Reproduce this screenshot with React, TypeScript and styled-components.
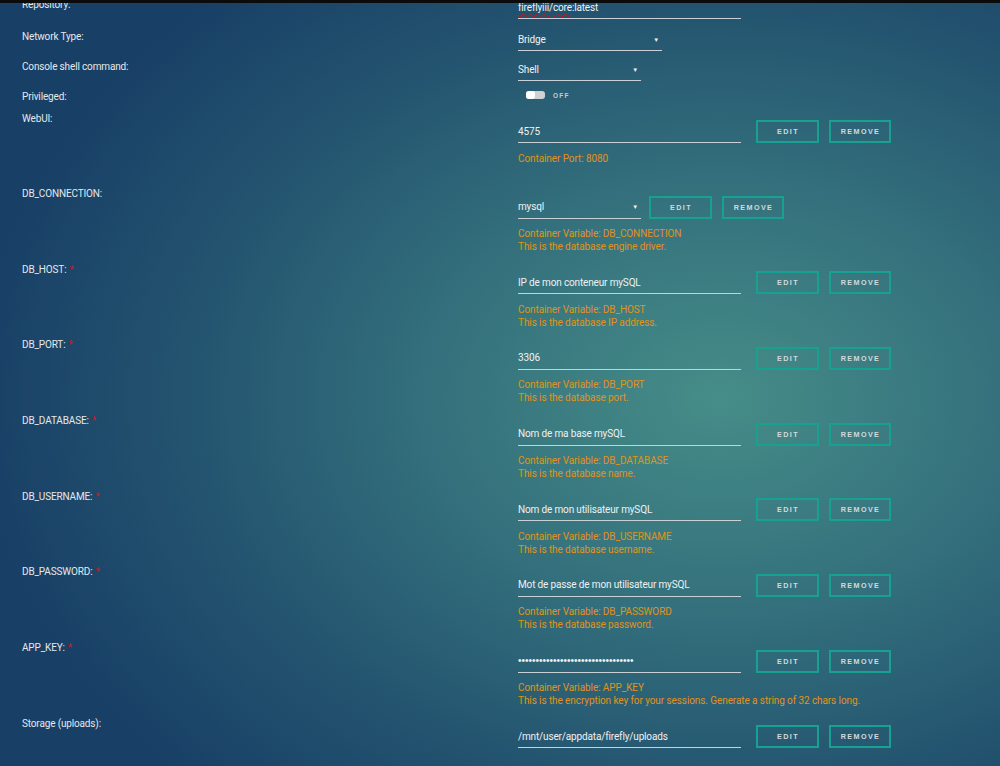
import React from "react";
import styled, { createGlobalStyle } from "styled-components";

const GlobalStyle = createGlobalStyle`
  html, body {
    margin: 0;
    padding: 0;
  }
  body {
    width: 1000px;
    height: 766px;
    overflow: hidden;
    font-family: Roboto, "Liberation Sans", Arial, sans-serif;
    background: radial-gradient(ellipse 75% 72% at 72% 52%, #468d88 0%, #336f7c 40%, #23536f 72%, #183f66 100%);
  }
`;

const TopBar = styled.div`
  position: fixed;
  top: 0;
  left: 0;
  right: 0;
  height: 3px;
  background: #0b0b0c;
  z-index: 5;
`;

const Page = styled.div`
  height: 766px;
  overflow: hidden;
  margin-top: -4px;
`;

type Kind = "first" | "simple" | "toggle" | "env";

const pad: Record<Kind, string> = {
  first: "9px",
  simple: "7px",
  toggle: "0",
  env: "9.67px",
};

const Row = styled.div<{ $kind: Kind }>`
  display: grid;
  grid-template-columns: 496px 1fr;
  padding-left: 22px;
  padding-bottom: ${(p) => pad[p.$kind]};
  height: ${(p) => (p.$kind === "toggle" ? "22px" : "auto")};
  box-sizing: border-box;
`;

const Label = styled.div`
  font-size: 10px;
  letter-spacing: -0.15px;
  line-height: 14px;
  padding-top: 1.5px;
  color: #e4e8ea;
`;

const Required = styled.span`
  color: #d3141c;
  margin-left: 3px;
`;

const Field = styled.div<{ $env?: boolean }>`
  padding-top: ${(p) => (p.$env ? "10px" : "0")};
  display: flex;
  flex-direction: column;
`;

const InputLine = styled.div<{ $gap: number }>`
  display: flex;
  align-items: flex-start;
  gap: ${(p) => p.$gap}px;
`;

const TextInput = styled.div<{ $w: number }>`
  width: ${(p) => p.$w}px;
  height: 23px;
  box-sizing: border-box;
  border-bottom: 1.5px solid #c9d1d6;
  display: flex;
  align-items: center;
  justify-content: space-between;
  font-size: 10px;
  letter-spacing: -0.15px;
  color: #eef1f2;
  white-space: nowrap;
`;

const Secret = styled.span`
  font-family: "Liberation Sans", Arial, sans-serif;
  font-size: 10px;
  letter-spacing: 0;
`;

const Arrow = styled.span`
  font-size: 6px;
  color: #eef1f2;
  margin-right: 3px;
`;

const Spell = styled.span`
  text-decoration: underline wavy #c8141c;
  text-decoration-thickness: 1px;
  text-underline-offset: 2px;
`;

const Buttons = styled.div`
  display: flex;
  gap: 10px;
`;

const Btn = styled.button<{ $w: number }>`
  width: ${(p) => p.$w}px;
  height: 23px;
  box-sizing: border-box;
  border: 2px solid #16a190;
  background: transparent;
  color: #d3dadd;
  font-family: "Liberation Sans", Arial, sans-serif;
  font-weight: bold;
  font-size: 7.2px;
  letter-spacing: 1.4px;
  padding: 0 0 0 1px;
  text-align: center;
`;

const Help = styled.div`
  margin-top: 8.5px;
  font-size: 10px;
  letter-spacing: -0.09px;
  line-height: 13px;
  color: #e0931a;
  min-height: 26px;
  margin-bottom: -1.5px;
`;

const ToggleWrap = styled.div`
  height: 14px;
  display: flex;
  align-items: center;
  padding-left: 8px;
  gap: 8px;
`;

const Switch = styled.div`
  width: 19px;
  height: 8px;
  border-radius: 3px;
  background: #cfd2d4;
  position: relative;
`;

const Knob = styled.div`
  position: absolute;
  left: 0;
  top: 0;
  width: 9px;
  height: 8px;
  border-radius: 3px;
  background: #ffffff;
`;

const SwitchText = styled.span`
  font-family: "Liberation Sans", Arial, sans-serif;
  font-size: 6.5px;
  font-weight: bold;
  letter-spacing: 1.2px;
  color: #c5ccd0;
`;

type Env = {
  label: string;
  required?: boolean;
  value: string;
  select?: boolean;
  secret?: boolean;
  help: string[];
};

const envs: Env[] = [
  { label: "WebUI:", value: "4575", help: ["Container Port: 8080"] },
  {
    label: "DB_CONNECTION:",
    value: "mysql",
    select: true,
    help: ["Container Variable: DB_CONNECTION", "This is the database engine driver."],
  },
  {
    label: "DB_HOST:",
    required: true,
    value: "IP de mon conteneur mySQL",
    help: ["Container Variable: DB_HOST", "This is the database IP address."],
  },
  {
    label: "DB_PORT:",
    required: true,
    value: "3306",
    help: ["Container Variable: DB_PORT", "This is the database port."],
  },
  {
    label: "DB_DATABASE:",
    required: true,
    value: "Nom de ma base mySQL",
    help: ["Container Variable: DB_DATABASE", "This is the database name."],
  },
  {
    label: "DB_USERNAME:",
    required: true,
    value: "Nom de mon utilisateur mySQL",
    help: ["Container Variable: DB_USERNAME", "This is the database username."],
  },
  {
    label: "DB_PASSWORD:",
    required: true,
    value: "Mot de passe de mon utilisateur mySQL",
    help: ["Container Variable: DB_PASSWORD", "This is the database password."],
  },
  {
    label: "APP_KEY:",
    required: true,
    value: "•".repeat(33),
    secret: true,
    help: [
      "Container Variable: APP_KEY",
      "This is the encryption key for your sessions. Generate a string of 32 chars long.",
    ],
  },
  { label: "Storage (uploads):", value: "/mnt/user/appdata/firefly/uploads", help: [] },
];

export default function App() {
  return (
    <>
      <GlobalStyle />
      <TopBar />
      <Page>
        <Row $kind="first">
          <Label>Repository:</Label>
          <Field>
            <TextInput $w={223}>
              <span>
                <Spell>fireflyiii</Spell>/<Spell>core</Spell>:latest
              </span>
            </TextInput>
          </Field>
        </Row>
        <Row $kind="simple">
          <Label>Network Type:</Label>
          <Field>
            <TextInput $w={144}>
              <span>Bridge</span>
              <Arrow>▼</Arrow>
            </TextInput>
          </Field>
        </Row>
        <Row $kind="simple">
          <Label>Console shell command:</Label>
          <Field>
            <TextInput $w={123}>
              <span>Shell</span>
              <Arrow>▼</Arrow>
            </TextInput>
          </Field>
        </Row>
        <Row $kind="toggle">
          <Label>Privileged:</Label>
          <Field>
            <ToggleWrap>
              <Switch>
                <Knob />
              </Switch>
              <SwitchText>OFF</SwitchText>
            </ToggleWrap>
          </Field>
        </Row>
        {envs.map((e) => (
          <Row $kind="env" key={e.label}>
            <Label>
              {e.label}
              {e.required && <Required>*</Required>}
            </Label>
            <Field $env>
              <InputLine $gap={e.select ? 8 : 15}>
                <TextInput $w={e.select ? 123 : 223}>
                  {e.secret ? <Secret>{e.value}</Secret> : <span>{e.value}</span>}
                  {e.select && <Arrow>▼</Arrow>}
                </TextInput>
                <Buttons>
                  <Btn $w={63}>EDIT</Btn>
                  <Btn $w={62}>REMOVE</Btn>
                </Buttons>
              </InputLine>
              {e.help.length > 0 && (
                <Help>
                  {e.help.map((h) => (
                    <div key={h}>{h}</div>
                  ))}
                </Help>
              )}
            </Field>
          </Row>
        ))}
      </Page>
    </>
  );
}
